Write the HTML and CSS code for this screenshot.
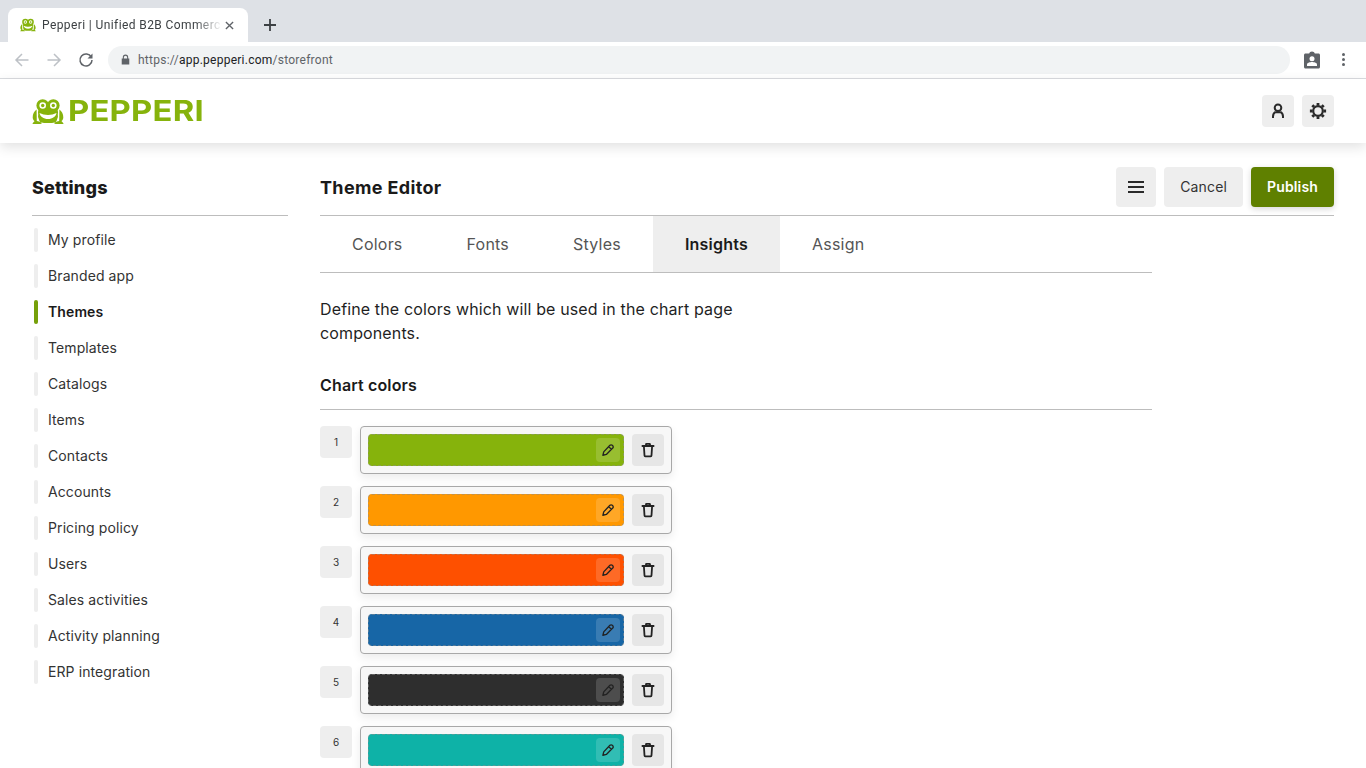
FILE: index.html
```html
<!DOCTYPE html>
<html lang="en">
<head>
<meta charset="utf-8">
<title>Pepperi | Unified B2B Commerce</title>
<link rel="stylesheet" href="styles.css">
</head>
<body>
<svg class="defs" width="0" height="0" aria-hidden="true">
  <defs>
    <symbol id="frog" viewBox="0 0 32 25">
      <g fill="#86b30c">
        <circle cx="10.700" cy="6.500" r="6.300"/><circle cx="21.300" cy="6.500" r="6.300"/>
        <rect x="6" y="7" width="20" height="17" rx="6"/>
        <path d="M4.600 10.600C2.300 12 .6 15.300 .7 18.500c0 1.500.7 2.900 1.900 3.600L.6 24.300c-.2.300 0 .7.400.7h7.500c.8 0 1.300-.5 1.500-1.200l-3-1.300-2.200-.6z"/>
        <path d="M27.400 10.600c2.300 1.400 4 4.700 3.900 7.900 0 1.500-.7 2.900-1.900 3.600l2 2.200c.2.300 0 .7-.4.700H23.500c-.8 0-1.300-.5-1.500-1.200l3-1.300 2.200-.6z"/>
      </g>
      <path fill="none" stroke="#fff" stroke-width="1.100" d="M5.700 14.500c-.5 2.500-.3 5 .8 7.300M26.300 14.500c.5 2.500.3 5-.8 7.300"/>
      <circle cx="10.700" cy="6.500" r="3.300" fill="#fff"/><circle cx="21.300" cy="6.500" r="3.300" fill="#fff"/>
      <circle cx="10.700" cy="6.500" r="1.700" fill="#86b30c"/><circle cx="21.300" cy="6.500" r="1.700" fill="#86b30c"/>
      <path fill="#fff" d="M7.500 14c2.500 1.300 5.500 2 8.500 2s6-.7 8.500-2c-.6 3.500-4 6-8.500 6s-7.900-2.500-8.500-6z"/>
    </symbol>
    <symbol id="pencil" viewBox="0 0 16 16">
      <path fill="none" stroke="currentColor" stroke-width="1.500" stroke-linejoin="round" d="M10.200 2.600a1.900 1.900 0 0 1 2.700 0l.5.500a1.900 1.900 0 0 1 0 2.700l-7.300 7.300-3.900.9.900-3.900zM8.700 4.100l3.200 3.200"/>
    </symbol>
    <symbol id="trash" viewBox="0 0 16 16">
      <path fill="none" stroke="currentColor" stroke-width="1.800" stroke-linejoin="round" stroke-linecap="round" d="M2.400 4h11.200M6 3.700V2.300c0-.3.200-.5.500-.5h3c.3 0 .5.200.5.500v1.400M3.900 4.200l.6 9.300c0 .5.400.8.800.8h5.400c.4 0 .8-.3.800-.8l.6-9.300"/>
    </symbol>
  </defs>
</svg>

<div class="tabstrip">
  <div class="tab">
    <svg class="tab-icon"><use href="#frog"/></svg>
    <span class="tab-title">Pepperi | Unified B2B Commerc</span>
    <svg class="tab-close" viewBox="0 0 10 10"><path d="M1 1l8 8M9 1l-8 8"/></svg>
  </div>
  <svg class="new-tab" viewBox="0 0 12 12"><path d="M6 0v12M0 6h12"/></svg>
</div>

<div class="toolbar">
  <svg class="nav nav-off" viewBox="0 0 16 16"><path d="M14.500 8H2M8 2L2 8l6 6"/></svg>
  <svg class="nav nav-off" viewBox="0 0 16 16"><path d="M1.500 8H14M8 2l6 6-6 6"/></svg>
  <svg class="nav nav-on" viewBox="0 0 16 16"><path d="M13.300 5.200A6 6 0 1 0 14 8"/><path class="solid" d="M14.500 1.500v5h-5z"/></svg>
  <div class="omnibox">
    <svg class="lock" viewBox="0 0 10 12"><path d="M2 5V3.500a3 3 0 0 1 6 0V5h1.200v6.500H.8V5zm1.200 0h3.600V3.500a1.800 1.800 0 0 0-3.600 0z"/></svg>
    <span class="url">https://<b>app.pepperi.com</b>/storefront</span>
  </div>
  <svg class="ext" viewBox="0 0 16 18"><path d="M1.500 2.500h3.700C5.500 1.300 6.600.4 8 .4s2.500.9 2.800 2.100h3.700c.8 0 1.500.7 1.500 1.500v12.100c0 .8-.7 1.500-1.500 1.500h-13C.7 17.600 0 16.900 0 16.100V4c0-.8.700-1.500 1.500-1.500z"/><circle class="ext-cut" cx="8" cy="7.700" r="2.500"/><path class="ext-cut" d="M3 15v-1.500c0-1.600 3.300-2.400 5-2.400s5 .8 5 2.400V15z"/></svg>
  <div class="dots"><i></i><i></i><i></i></div>
</div>

<header class="app-header">
  <a class="logo"><svg class="logo-frog"><use href="#frog"/></svg><span class="logo-text">PEPPERI</span></a>
  <div class="header-actions">
    <button class="icon-btn"><svg class="person" viewBox="0 0 16 16"><circle class="line" cx="8" cy="4.800" r="3.300"/><path class="line" d="M3 15v-1.500c0-2 .9-3.600 2.600-4.600M13 15v-1.500c0-2-.9-3.600-2.600-4.600M5.600 9.300h4.800"/></svg></button>
    <button class="icon-btn"><svg viewBox="0 0 18 18"><circle class="line gear" cx="9" cy="9" r="4.800"/><path class="line heavy" d="M9 .9v2.600M9 14.500v2.600M.9 9h2.600M14.500 9h2.600M3.300 3.300L5.100 5.100M12.900 12.900l1.800 1.800M3.300 14.700l1.800-1.800M12.900 5.100l1.800-1.800"/></svg></button>
  </div>
</header>

<div class="page">
  <aside class="sidebar">
    <h2 class="side-title">Settings</h2>
    <nav class="side-nav">
      <a class="side-link">My profile</a>
      <a class="side-link">Branded app</a>
      <a class="side-link active">Themes</a>
      <a class="side-link">Templates</a>
      <a class="side-link">Catalogs</a>
      <a class="side-link">Items</a>
      <a class="side-link">Contacts</a>
      <a class="side-link">Accounts</a>
      <a class="side-link">Pricing policy</a>
      <a class="side-link">Users</a>
      <a class="side-link">Sales activities</a>
      <a class="side-link">Activity planning</a>
      <a class="side-link">ERP integration</a>
    </nav>
  </aside>
  <main class="main">
    <div class="main-head">
      <h1 class="main-title">Theme Editor</h1>
      <div class="main-actions">
        <button class="btn btn-menu"><svg viewBox="0 0 16 12"><path d="M0 1h16M0 6h16M0 11h16"/></svg></button>
        <button class="btn btn-cancel">Cancel</button>
        <button class="btn btn-publish">Publish</button>
      </div>
    </div>
    <div class="editor">
      <div class="tabs">
        <a class="tab-link">Colors</a>
        <a class="tab-link">Fonts</a>
        <a class="tab-link">Styles</a>
        <a class="tab-link selected">Insights</a>
        <a class="tab-link">Assign</a>
      </div>
      <p class="intro">Define the colors which will be used in the chart page components.</p>
      <h3 class="section-title">Chart colors</h3>
      <div class="rows">
        <div class="row"><span class="num">1</span><div class="card"><div class="swatch c1"><span class="edit"><svg><use href="#pencil"/></svg></span></div><span class="del"><svg><use href="#trash"/></svg></span></div></div>
        <div class="row"><span class="num">2</span><div class="card"><div class="swatch c2"><span class="edit"><svg><use href="#pencil"/></svg></span></div><span class="del"><svg><use href="#trash"/></svg></span></div></div>
        <div class="row"><span class="num">3</span><div class="card"><div class="swatch c3"><span class="edit"><svg><use href="#pencil"/></svg></span></div><span class="del"><svg><use href="#trash"/></svg></span></div></div>
        <div class="row"><span class="num">4</span><div class="card"><div class="swatch c4"><span class="edit"><svg><use href="#pencil"/></svg></span></div><span class="del"><svg><use href="#trash"/></svg></span></div></div>
        <div class="row"><span class="num">5</span><div class="card"><div class="swatch c5"><span class="edit"><svg><use href="#pencil"/></svg></span></div><span class="del"><svg><use href="#trash"/></svg></span></div></div>
        <div class="row"><span class="num">6</span><div class="card"><div class="swatch c6"><span class="edit"><svg><use href="#pencil"/></svg></span></div><span class="del"><svg><use href="#trash"/></svg></span></div></div>
      </div>
    </div>
  </main>
</div>
</body>
</html>
```
FILE: styles.css
```css
* { box-sizing: border-box; }
html, body { margin: 0; height: 768px; overflow: hidden; background: #fff; }
body { font-family: Inter, "Liberation Sans", sans-serif; color: #1a1a1a; font-size: 14px; }
.defs { position: absolute; }
h1, h2, h3, p { margin: 0; }

/* browser chrome */
.tabstrip { height: 42px; background: #dee1e6; display: flex; padding: 8px 0 0 8px; font-family: Roboto, "Liberation Sans", sans-serif; }
.tab { width: 240px; height: 34px; background: #fff; border-radius: 8px 8px 0 0; display: flex; align-items: center; padding: 0 11px 0 12px; position: relative; }
.tab-icon { width: 16px; height: 16px; flex: none; }
.tab-title { margin-left: 6px; width: 180px; white-space: nowrap; font-size: 12px; letter-spacing: .4px; color: #3c4043; -webkit-mask-image: linear-gradient(to right, #000 85%, transparent 100%); mask-image: linear-gradient(to right, #000 85%, transparent 100%); }
.tab-close { width: 9px; height: 9px; margin-left: 3px; flex: none; }
.tab-close path { stroke: #5f6368; stroke-width: 1.500; fill: none; }
.new-tab { width: 12px; height: 12px; margin: 11px 0 0 16px; }
.new-tab path { stroke: #3c4043; stroke-width: 1.800; fill: none; }

.toolbar { height: 37px; background: #fff; border-bottom: 1px solid #dadce0; display: flex; align-items: center; padding: 0 0 1px 14px; }
.nav { width: 16px; height: 16px; flex: none; margin-right: 16px; }
.nav path { fill: none; stroke-width: 1.500; }
.nav-off path { stroke: #bdc1c6; }
.nav-on { margin-right: 14px; }
.nav-on path { stroke: #5f6368; }
.nav-on .solid { fill: #5f6368; stroke: none; }
.omnibox { width: 1182px; height: 28px; border-radius: 14px; background: #f1f3f4; display: flex; align-items: center; padding-left: 13px; font-family: Roboto, "Liberation Sans", sans-serif; font-size: 12px; letter-spacing: .25px; color: #5f6368; }
.lock { width: 9px; height: 11px; fill: #5f6368; margin-right: 8px; }
.url b { font-weight: 400; color: #202124; }
.ext { width: 16px; height: 18px; margin-left: 14px; fill: #5f6368; flex: none; }
.ext-cut { fill: #fff; }
.dots { margin-left: 22px; display: flex; flex-direction: column; gap: 2px; }
.dots i { width: 3px; height: 3px; border-radius: 50%; background: #5f6368; }

/* app header */
.app-header { height: 64px; padding: 0 32px; display: flex; align-items: center; justify-content: space-between; background: #fff; box-shadow: 0 4px 12px rgba(0,0,0,.12); position: relative; }
.logo { display: flex; align-items: center; gap: 4px; }
.logo-frog { width: 32px; height: 25px; }
.logo-text { font-family: Inter, sans-serif; font-weight: 700; font-size: 29px; line-height: 32px; letter-spacing: .2px; color: #86b30c; transform: scaleX(1.13); transform-origin: left center; }
.header-actions { display: flex; gap: 8px; }
.icon-btn { width: 32px; height: 32px; border: 0; padding: 0; border-radius: 4px; background: #eee; display: flex; align-items: center; justify-content: center; }
.icon-btn svg { width: 18px; height: 18px; }
.icon-btn .person { width: 16px; height: 16px; }
.line { fill: none; stroke: #2a2a2a; stroke-width: 2; }
.gear { stroke-width: 2.200; }
.heavy { stroke-width: 2.800; }

/* page */
.page { display: flex; gap: 32px; padding: 24px 32px 0; }
.sidebar { width: 256px; flex: none; }
.side-title { height: 49px; padding-top: 8px; border-bottom: 1px solid #bdbdbd; font-size: 18px; line-height: 26px; font-weight: 800; letter-spacing: .2px; color: #1a1a1a; }
.side-nav { display: flex; flex-direction: column; padding-top: 6px; }
.side-link { height: 36px; display: flex; align-items: center; padding: 0 0 2px 16px; position: relative; font-size: 14px; letter-spacing: .1px; color: #333; }
.side-link::before { content: ""; position: absolute; left: 2px; top: 6px; width: 4px; height: 24px; border-radius: 2px; background: #eee; }
.side-link.active { font-weight: 600; color: #1a1a1a; }
.side-link.active::before { background: #76a00a; }

.main { flex: 1; min-width: 0; }
.main-head { height: 49px; border-bottom: 1px solid #bdbdbd; display: flex; justify-content: space-between; align-items: flex-start; }
.main-title { font-size: 18px; line-height: 26px; font-weight: 700; margin-top: 8px; letter-spacing: .35px; color: #1a1a1a; }
.main-actions { display: flex; gap: 8px; }
.btn { height: 40px; border: 0; border-radius: 4px; font-family: Inter, sans-serif; font-size: 14px; letter-spacing: .15px; padding: 0 16px 2px; background: #eee; color: #333; }
.btn-menu { width: 40px; padding: 0; display: flex; align-items: center; justify-content: center; }
.btn-menu svg { width: 16px; height: 12px; }
.btn-menu path { stroke: #2a2a2a; stroke-width: 2; fill: none; }
.btn-publish { background: #5f8000; color: #fff; font-weight: 600; box-shadow: 0 2px 6px rgba(0,0,0,.16); }

.editor { width: 832px; }
.tabs { display: flex; height: 57px; border-bottom: 1px solid #bdbdbd; }
.tab-link { height: 56px; padding: 0 32px; display: flex; align-items: center; font-size: 16px; letter-spacing: .22px; color: #555; }
.tab-link.selected { background: #eee; font-weight: 600; color: #1a1a1a; }
.intro { width: 448px; margin-top: 24px; font-size: 16px; line-height: 24px; letter-spacing: .13px; color: #1f1f1f; }
.section-title { margin-top: 28px; height: 37px; line-height: 24px; border-bottom: 1px solid #bdbdbd; font-size: 16px; font-weight: 600; letter-spacing: .15px; color: #1a1a1a; }
.rows { padding-top: 16px; display: flex; flex-direction: column; gap: 12px; }
.row { display: flex; gap: 8px; align-items: flex-start; }
.num { width: 32px; height: 32px; border-radius: 4px; background: #eee; display: flex; align-items: center; justify-content: center; font-size: 10px; color: #333; }
.card { width: 312px; height: 48px; border: 1px solid #a8a8a8; border-radius: 4px; background: #f7f7f7; padding: 7px; display: flex; gap: 8px; box-shadow: 0 4px 10px rgba(0,0,0,.08); }
.swatch { width: 256px; height: 32px; border-radius: 4px; border: 1px dashed rgba(140,140,140,.55); display: flex; align-items: center; justify-content: flex-end; padding-right: 3px; }
.c1 { background: #86b30c; }
.c2 { background: #ff9800; }
.c3 { background: #fe5000; }
.c4 { background: #1766a6; }
.c5 { background: #2e2e2e; }
.c6 { background: #0eb2a7; }
.edit { width: 24px; height: 24px; border-radius: 4px; background: rgba(255,255,255,.15); display: flex; align-items: center; justify-content: center; color: #222; }
.edit svg { width: 14px; height: 14px; }
.del { width: 32px; height: 32px; border-radius: 4px; background: #e6e6e6; display: flex; align-items: center; justify-content: center; color: #222; }
.del svg { width: 16px; height: 16px; }
```
